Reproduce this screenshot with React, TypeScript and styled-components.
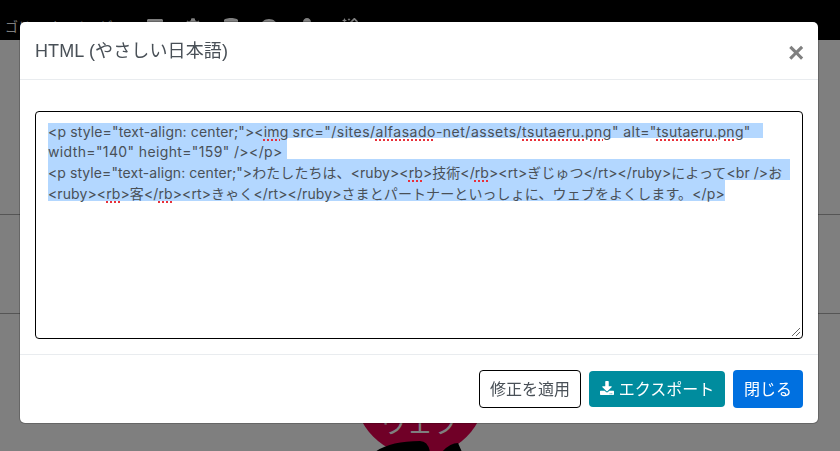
import React from 'react';
import styled, { createGlobalStyle } from 'styled-components';
import { FaCog, FaComment, FaDatabase, FaDownload, FaMagic, FaRegWindowMaximize, FaUser } from 'react-icons/fa';

const Global = createGlobalStyle`
  html, body { margin: 0; height: 100%; overflow: hidden; background: #fff; }
  body { font-family: "Liberation Sans", "Noto Sans CJK JP", sans-serif; color: #495057; }
`;

const Page = styled.div`
  width: 840px;
  height: 451px;
  overflow: hidden;
  display: flex;
  flex-direction: column;
`;

const TopBar = styled.nav`
  height: 40px;
  flex: none;
  background: #000;
  color: #fff;
  display: flex;
  align-items: center;
  font-size: 13px;
  padding-top: 10px;
  box-sizing: border-box;
`;

const NavText = styled.span<{ $w: number }>`
  flex: none;
  width: ${p => p.$w}px;
  white-space: nowrap;
`;

const NavIcon = styled.span<{ $w: number }>`
  flex: none;
  width: ${p => p.$w}px;
  display: flex;
  justify-content: center;
  font-size: 16px;
  margin-top: 2px;
`;

const Row = styled.div<{ $h: number }>`
  height: ${p => p.$h}px;
  flex: none;
  box-sizing: border-box;
  border-bottom: 1px solid #aaa;
`;

const LogoWrap = styled.div`
  display: flex;
  justify-content: center;
  padding-top: 11px;
`;

const Backdrop = styled.div`
  position: fixed;
  inset: 0;
  background: rgba(0, 0, 0, 0.5);
  padding: 22px 0 0 20px;
`;

const Dialog = styled.div`
  width: 798px;
  height: 401px;
  box-sizing: border-box;
  background: #fff;
  border-radius: 5px;
  box-shadow: 0 0 0 1px rgba(0, 0, 0, 0.2);
  display: flex;
  flex-direction: column;
`;

const Header = styled.header`
  height: 58px;
  flex: none;
  box-sizing: border-box;
  border-bottom: 1px solid #e9ecef;
  display: flex;
  justify-content: space-between;
  padding: 0 15px;
`;

const Title = styled.h5`
  margin: 0;
  font-size: 18px;
  font-weight: 400;
  line-height: 58px;
  letter-spacing: 0.12px;
  color: #495057;
`;

const CloseX = styled.button`
  border: 0;
  background: none;
  padding: 0;
  margin-top: 2px;
  width: 15px;
  font-family: "Liberation Sans", sans-serif;
  font-size: 28px;
  font-weight: 700;
  line-height: 58px;
  color: #808080;
`;

const Body = styled.div`
  flex: 1;
  padding: 31px 15px 15px;
  border-bottom: 1px solid #e9ecef;
`;

const Source = styled.div`
  position: relative;
  height: 228px;
  box-sizing: border-box;
  border: 1px solid #000;
  border-radius: 4px;
  padding: 11px 12px 0;
  font-family: Inter, "Noto Sans CJK JP", sans-serif;
  font-size: 14px;
  color: #495057;
  background: #fff;
`;

const Line = styled.div<{ $first?: boolean; $w: number; $ls?: number }>`
  width: ${p => p.$w}px;
  height: ${p => (p.$first ? 15 : 21)}px;
  line-height: ${p => (p.$first ? 17 : 27)}px;
  letter-spacing: ${p => p.$ls ?? 0}px;
  background: #b3d7ff;
  white-space: nowrap;
`;

const Seg = styled.span<{ $ls: number }>`
  letter-spacing: ${p => p.$ls}px;
`;

const Typo = styled.span`
  text-decoration: underline dotted #e8303a 2px;
  text-underline-offset: 2px;
`;

const Grip = styled.svg`
  position: absolute;
  right: 1px;
  bottom: 1px;
`;

const Footer = styled.footer`
  flex: 1;
  display: flex;
  justify-content: flex-end;
  align-items: center;
  gap: 8px;
  padding: 0 15px;
`;

const Btn = styled.button<{ $kind: 'outline' | 'export' | 'close' }>`
  box-sizing: border-box;
  height: ${p => (p.$kind === 'export' ? 36 : 38)}px;
  width: ${p => (p.$kind === 'outline' ? 102 : p.$kind === 'export' ? 136 : 70)}px;
  padding: 0 0 3px;
  font-family: inherit;
  font-size: 16px;
  border-radius: 4px;
  border: ${p => (p.$kind === 'outline' ? '1px solid #000' : '0')};
  background: ${p => (p.$kind === 'outline' ? '#fff' : p.$kind === 'export' ? '#008c9e' : '#0070e0')};
  color: ${p => (p.$kind === 'outline' ? '#495057' : '#fff')};
  display: flex;
  align-items: center;
  justify-content: center;
  gap: 5px;
`;

const navIcons = [
  { w: 38, I: FaRegWindowMaximize },
  { w: 38, I: FaCog },
  { w: 38, I: FaDatabase },
  { w: 38, I: FaComment },
  { w: 38, I: FaUser },
  { w: 48, I: FaMagic },
];

export default function App() {
  return (
    <Page>
      <Global />
      <TopBar>
        <NavText $w={5} />
        <NavText $w={33}>ゴリ</NavText>
        <NavText $w={62}>アセット</NavText>
        <NavText $w={36}>ビュー</NavText>
        {navIcons.map(({ w, I }, i) => (
          <NavIcon key={i} $w={w}><I /></NavIcon>
        ))}
      </TopBar>
      <Row $h={175} />
      <Row $h={99} />
      <LogoWrap>
        <svg width="140" height="127" viewBox="0 0 140 127">
          <circle cx="70" cy="65" r="66" fill="#e0004f" />
          <text x="70" y="108" textAnchor="middle" fontSize="26" fill="#fff" fontFamily="Noto Sans CJK JP">ウェブ</text>
          <path d="M25 127 Q40 116 70 116 Q78 116 80 127Z M92 127 Q100 118 108 118 L112 127Z" fill="#000" />
        </svg>
      </LogoWrap>
      <Backdrop>
        <Dialog role="dialog">
          <Header>
            <Title>HTML (やさしい日本語)</Title>
            <CloseX>×</CloseX>
          </Header>
          <Body>
            <Source role="textbox">
              <Line $first $w={715}>
                <Seg $ls={0.14}>&lt;p style="text-align: center;"&gt;&lt;<Typo>img</Typo> </Seg>
                <Seg $ls={0.5}>src="/sites/<Typo>alfasado</Typo>-net/assets/<Typo>tsutaeru.png</Typo>" </Seg>
                <Seg $ls={0.28}>alt="<Typo>tsutaeru.png</Typo>"</Seg>
              </Line>
              <Line $w={239} $ls={0.37}>width="140" height="159" /&gt;&lt;/p&gt;</Line>
              <Line $w={742} $ls={0.07}>&lt;p style="text-align: center;"&gt;わたしたちは、&lt;ruby&gt;&lt;<Typo>rb</Typo>&gt;技術&lt;/<Typo>rb</Typo>&gt;&lt;rt&gt;ぎじゅつ&lt;/rt&gt;&lt;/ruby&gt;によって&lt;br /&gt;お</Line>
              <Line $w={677} $ls={0.1}>&lt;ruby&gt;&lt;<Typo>rb</Typo>&gt;客&lt;/<Typo>rb</Typo>&gt;&lt;rt&gt;きゃく&lt;/rt&gt;&lt;/ruby&gt;さまとパートナーといっしょに、ウェブをよくします。&lt;/p&gt;</Line>
              <Grip width="11" height="11" viewBox="0 0 11 11">
                <path d="M2 10 L10 2 M6 10 L10 6" stroke="#666" strokeWidth="1" />
              </Grip>
            </Source>
          </Body>
          <Footer>
            <Btn $kind="outline">修正を適用</Btn>
            <Btn $kind="export"><FaDownload size={14} />エクスポート</Btn>
            <Btn $kind="close">閉じる</Btn>
          </Footer>
        </Dialog>
      </Backdrop>
    </Page>
  );
}
